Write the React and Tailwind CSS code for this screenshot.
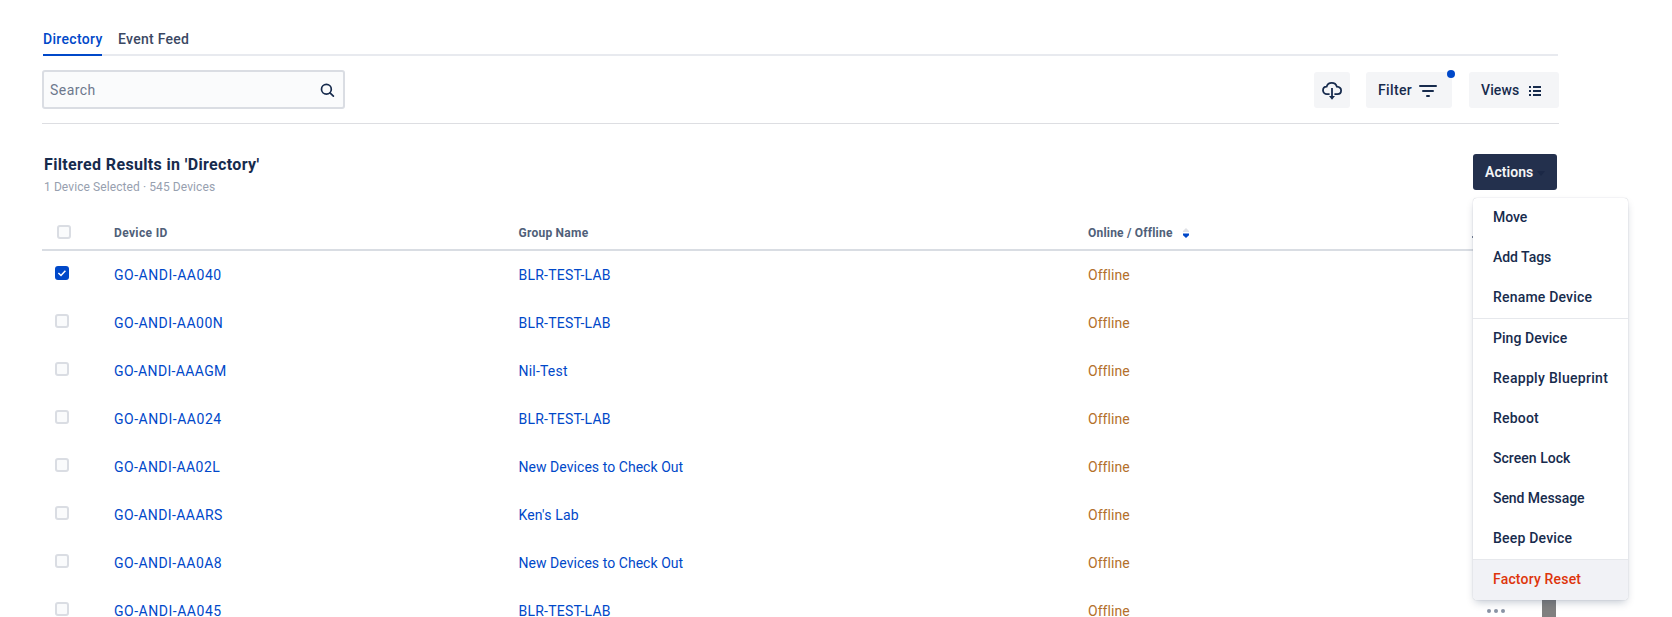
const devices = [
  { id: "GO-ANDI-AA040", idCls: "tracking-[0.52px]", group: "BLR-TEST-LAB", groupCls: "tracking-[0.22px]", checked: true },
  { id: "GO-ANDI-AA00N", idCls: "tracking-[0.48px]", group: "BLR-TEST-LAB", groupCls: "tracking-[0.22px]" },
  { id: "GO-ANDI-AAAGM", idCls: "tracking-[0.35px]", group: "Nil-Test", groupCls: "tracking-[0.2px]" },
  { id: "GO-ANDI-AA024", idCls: "tracking-[0.52px]", group: "BLR-TEST-LAB", groupCls: "tracking-[0.22px]" },
  { id: "GO-ANDI-AA02L", idCls: "tracking-[0.43px]", group: "New Devices to Check Out", groupCls: "tracking-[0.05px]" },
  { id: "GO-ANDI-AAARS", idCls: "tracking-[0.41px]", group: "Ken's Lab", groupCls: "tracking-[0.17px]" },
  { id: "GO-ANDI-AA0A8", idCls: "tracking-[0.46px]", group: "New Devices to Check Out", groupCls: "tracking-[0.05px]" },
  { id: "GO-ANDI-AA045", idCls: "tracking-[0.52px]", group: "BLR-TEST-LAB", groupCls: "tracking-[0.22px]" },
];

const menuGroups = [
  [
    { label: "Move", cls: "tracking-[-0.06px]" },
    { label: "Add Tags", cls: "tracking-[-0.03px]" },
    { label: "Rename Device", cls: "tracking-[0.19px]" },
  ],
  [
    { label: "Ping Device", cls: "tracking-[0.06px]" },
    { label: "Reapply Blueprint", cls: "tracking-[0.3px]" },
    { label: "Reboot", cls: "tracking-[0.2px]" },
    { label: "Screen Lock", cls: "tracking-[0.04px]" },
    { label: "Send Message", cls: "tracking-[-0.06px]" },
    { label: "Beep Device", cls: "tracking-[0.2px]" },
  ],
];

const columns = "grid grid-cols-[72px_404.5px_569.500px_1fr]";

function Checkbox({ checked }) {
  if (checked) {
    return (
      <span className="flex size-3.5 items-center justify-center rounded-[3px] bg-[#0048c9]">
        <svg width="10" height="10" viewBox="0 0 10 10" fill="none" stroke="#fff" strokeWidth="1.5">
          <path d="M1.4 5 4 7.5 8.4 2.7" />
        </svg>
      </span>
    );
  }
  return <span className="block size-3.5 rounded-[3px] border-2 border-[#dadde3] bg-[#fafbfc]" />;
}

function Tabs() {
  return (
    <nav className="ml-px flex h-[26px] w-[1515px] gap-4 border-b-2 border-[#e8eaef] text-sm leading-[19px] font-medium">
      <span className="-mb-0.5 h-[26px] w-[59px] border-b-2 border-[#0048c9] tracking-[0.33px] text-[#0048c9]">Directory</span>
      <span className="tracking-[0.28px] text-[#3b4863]">Event Feed</span>
    </nav>
  );
}

function Toolbar() {
  return (
    <div className="flex h-[68px] w-[1517px] items-start border-b border-[#dddee2] pt-3.5">
      <div className="flex h-[39px] w-[303px] items-center justify-between rounded-[3px] border-2 border-[#dadde3] bg-[#fafbfc] pr-2 pl-1.5">
        <span className="text-sm tracking-[0.45px] text-[#6d788d]">Search</span>
        <svg className="mt-0.5" width="15" height="15" viewBox="0 0 15 15" fill="none" stroke="#172b4d" strokeWidth="1.7">
          <circle cx="6.4" cy="6.2" r="4.9" />
          <path d="m10 9.8 3.4 3.4" strokeLinecap="round" />
        </svg>
      </div>
      <div className="mt-0.5 ml-auto flex h-9 text-sm font-medium text-[#172b4d]">
        <button className="flex w-9 items-center justify-center rounded-[3px] bg-[#f4f5f7]">
          <svg className="mt-0.5" width="20" height="18" viewBox="0 0 20 18" fill="none" stroke="#172b4d" strokeWidth="1.8">
            <path d="M7.600 12.100H5a3.900 3.900 0 0 1-4-3.700c0-2 1.500-3.600 3.600-3.700C5.300 2.400 7.400.9 9.700.9c2.500 0 4.500 1.500 5.100 3.700 2.400.2 4.300 1.700 4.300 3.900s-1.700 3.600-3.700 3.600h-3" />
            <path d="M10 6v10" />
            <path d="M7 14h6l-3 3.800z" fill="#172b4d" stroke="none" />
          </svg>
        </button>
        <button className="relative ml-4 flex w-[86px] items-center rounded-[3px] bg-[#f4f5f7] pl-3">
          <span className="tracking-[0.37px]">Filter</span>
          <svg className="absolute top-[13px] left-[53px]" width="18" height="12" viewBox="0 0 18 12" fill="#172b4d">
            <rect x="0" y="0" width="18" height="2" rx="1" />
            <rect x="3" y="5" width="12" height="2" rx="1" />
            <rect x="7" y="10" width="4" height="2" rx="1" />
          </svg>
          <span className="absolute -top-0.5 right-[-3px] size-2 rounded-full bg-[#0048c9]" />
        </button>
        <button className="ml-[17px] flex w-[90px] items-center rounded-[3px] bg-[#f4f5f7] pl-3">
          <span className="w-12 text-left tracking-[0.1px]">Views</span>
          <svg className="mt-0.5" width="12" height="10" viewBox="0 0 12 10" fill="#172b4d">
            <path d="M0 0h2v2H0zM4 0h8v2H4zM0 4h2v2H0zM4 4h8v2H4zM0 8h2v2H0zM4 8h8v2H4z" />
          </svg>
        </button>
      </div>
    </div>
  );
}

function ActionsMenu() {
  return (
    <div className="absolute top-11 left-0 z-10 w-[155px] overflow-hidden rounded-[4px] bg-white text-sm font-medium text-[#172b4d] shadow-[0_4px_8px_-2px_rgba(9,30,66,0.25),0_0_1px_rgba(9,30,66,0.31)]">
      {menuGroups.map((group, i) => (
        <div key={i} className="border-b border-[#e6e8ec]">
          {group.map((item) => (
            <div key={item.label} className="flex h-10 items-center pb-0.5 pl-5">
              <span className={item.cls}>{item.label}</span>
            </div>
          ))}
        </div>
      ))}
      <div className="flex h-10 items-center bg-[#f1f2f6] pb-0.5 pl-5 text-[#de350b]">
        <span className="tracking-[0.18px]">Factory Reset</span>
      </div>
    </div>
  );
}

function ResultsHeader() {
  return (
    <div className="flex h-[91px] w-[1515px] items-start justify-between pt-[30px]">
      <div className="pl-0.5">
        <h1 className="text-base leading-[22px] font-bold tracking-[0.35px] text-[#172b4d]">Filtered Results in 'Directory'</h1>
        <p className="text-xs leading-[22px] tracking-[0.09px] text-[#97a0af]">1 Device Selected · 545 Devices</p>
      </div>
      <div className="relative w-[84px]">
        <button className="flex h-9 w-[84px] items-center rounded-[3px] bg-[#23304d] pl-3 text-sm font-semibold text-[#f4f5f7]">
          <span className="tracking-[0.05px]">Actions</span>
          <svg className="mt-0.5 ml-1" width="8" height="5" viewBox="0 0 8 5" fill="#1b2846">
            <path d="M0 0h8L4 5z" />
          </svg>
        </button>
        <ActionsMenu />
      </div>
    </div>
  );
}

function DeviceTable() {
  return (
    <div className="w-[1515px]">
      <div className={`${columns} h-9 items-start border-b-2 border-[#d9dde3] text-xs leading-4 font-bold text-[#505f79]`}>
        <div className="pt-[10px] pl-[15px]">
          <Checkbox />
        </div>
        <div className="pt-[10px] tracking-[0.36px]">Device ID</div>
        <div className="pt-[10px] tracking-[0.25px]">Group Name</div>
        <div className="flex items-center pt-[10px]">
          <span className="w-[95px] tracking-[0.2px]">Online / Offline</span>
          <svg width="6" height="10" viewBox="0 0 6 10">
            <path d="M0 4V3l3-3 3 3v1z" fill="#dfe1e6" />
            <path d="M0 5.500h6v1.800l-3 2.700-3-2.700z" fill="#0048c9" />
          </svg>
          <span className="mt-2 ml-[283px] h-0.5 w-px bg-[#7a8699]" />
        </div>
      </div>
      {devices.map((d) => (
        <div key={d.id} className={`${columns} h-12 items-center text-sm leading-3 text-[#0048c9]`}>
          <div className="pb-1 pl-[13px]">
            <Checkbox checked={d.checked} />
          </div>
          <div className={d.idCls}>{d.id}</div>
          <div className={d.groupCls}>{d.group}</div>
          <div className="flex items-center">
            <span className="w-[399px] tracking-[0.05px] text-[#b3702b]">Offline</span>
            <span className="flex gap-[3px]">
              <i className="size-1 rounded-full bg-[#8993a4]" />
              <i className="size-1 rounded-full bg-[#8993a4]" />
              <i className="size-1 rounded-full bg-[#8993a4]" />
            </span>
            <span className="ml-[37px] h-12 w-3.5 bg-[#808080]" />
          </div>
        </div>
      ))}
    </div>
  );
}

export default function App() {
  return (
    <main className="h-[617px] overflow-hidden bg-white pt-[30px] pl-[42px] font-['Roboto','Liberation_Sans',sans-serif]">
      <Tabs />
      <Toolbar />
      <ResultsHeader />
      <DeviceTable />
    </main>
  );
}
